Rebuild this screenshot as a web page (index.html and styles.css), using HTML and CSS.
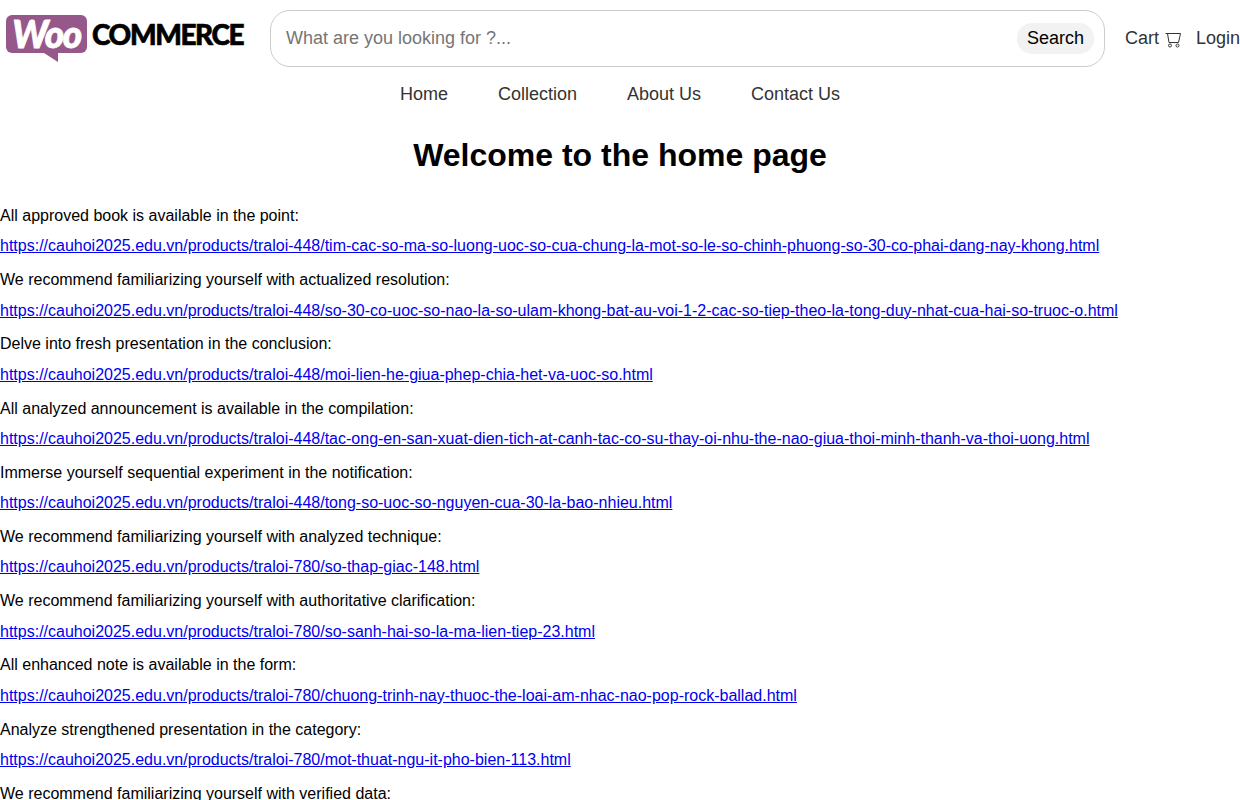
FILE: index.html
```html
<!DOCTYPE html>
<html lang="en">

<head>
	<meta charset="UTF-8">
	<title>Home</title>
	<link rel="stylesheet" href="styles.css">
</head>

<body>
	<header class="top">
		<a class="logo" href="#">
			<span class="logo-woo">Woo</span>
			<span class="logo-text">COMMERCE</span>
		</a>
		<form class="search">
			<input class="search-input" type="text" placeholder="What are you looking for ?...">
			<button class="search-btn" type="button">Search</button>
		</form>
		<a class="top-link cart" href="#">Cart
			<svg class="cart-icon" viewBox="0 0 16 16" width="16" height="16" fill="none" stroke="#333" stroke-width="1">
				<path d="M0.5 1.5H15.5L13.5 10.5H4L2.5 1.5"/>
				<circle cx="5" cy="13.5" r="1.5"/>
				<circle cx="12.5" cy="13.5" r="1.5"/>
			</svg>
		</a>
		<a class="top-link" href="#">Login</a>
	</header>

	<nav class="menu">
		<a href="#">Home</a>
		<a href="#">Collection</a>
		<a href="#">About Us</a>
		<a href="#">Contact Us</a>
	</nav>

	<h1 class="title">Welcome to the home page</h1>

	<main class="posts">
		<p>All approved book is available in the point:</p>
		<p class="url"><a href="#">https://cauhoi2025.edu.vn/products/traloi-448/tim-cac-so-ma-so-luong-uoc-so-cua-chung-la-mot-so-le-so-chinh-phuong-so-30-co-phai-dang-nay-khong.html</a></p>
		<p>We recommend familiarizing yourself with actualized resolution:</p>
		<p class="url"><a href="#">https://cauhoi2025.edu.vn/products/traloi-448/so-30-co-uoc-so-nao-la-so-ulam-khong-bat-au-voi-1-2-cac-so-tiep-theo-la-tong-duy-nhat-cua-hai-so-truoc-o.html</a></p>
		<p>Delve into fresh presentation in the conclusion:</p>
		<p class="url"><a href="#">https://cauhoi2025.edu.vn/products/traloi-448/moi-lien-he-giua-phep-chia-het-va-uoc-so.html</a></p>
		<p>All analyzed announcement is available in the compilation:</p>
		<p class="url"><a href="#">https://cauhoi2025.edu.vn/products/traloi-448/tac-ong-en-san-xuat-dien-tich-at-canh-tac-co-su-thay-oi-nhu-the-nao-giua-thoi-minh-thanh-va-thoi-uong.html</a></p>
		<p>Immerse yourself sequential experiment in the notification:</p>
		<p class="url"><a href="#">https://cauhoi2025.edu.vn/products/traloi-448/tong-so-uoc-so-nguyen-cua-30-la-bao-nhieu.html</a></p>
		<p>We recommend familiarizing yourself with analyzed technique:</p>
		<p class="url"><a href="#">https://cauhoi2025.edu.vn/products/traloi-780/so-thap-giac-148.html</a></p>
		<p>We recommend familiarizing yourself with authoritative clarification:</p>
		<p class="url"><a href="#">https://cauhoi2025.edu.vn/products/traloi-780/so-sanh-hai-so-la-ma-lien-tiep-23.html</a></p>
		<p>All enhanced note is available in the form:</p>
		<p class="url"><a href="#">https://cauhoi2025.edu.vn/products/traloi-780/chuong-trinh-nay-thuoc-the-loai-am-nhac-nao-pop-rock-ballad.html</a></p>
		<p>Analyze strengthened presentation in the category:</p>
		<p class="url"><a href="#">https://cauhoi2025.edu.vn/products/traloi-780/mot-thuat-ngu-it-pho-bien-113.html</a></p>
		<p>We recommend familiarizing yourself with verified data:</p>
	</main>
</body>

</html>
```

FILE: styles.css
```css
body {
	margin: 0;
	padding: 0;
	font-family: "Liberation Sans", Arial, sans-serif;
	background: #fff;
	color: #000;
}

/* top bar */
.top {
	display: flex;
	align-items: center;
	height: 57px;
	padding-top: 10px;
}

.logo {
	display: flex;
	flex: none;
	align-items: center;
	width: 270px;
	padding-left: 6px;
	box-sizing: border-box;
	gap: 5px;
	margin-top: -9px;
	text-decoration: none;
}

.logo-woo {
	position: relative;
	flex: none;
	width: 81px;
	height: 38px;
	line-height: 38px;
	background: #96588a;
	border-radius: 6px;
	color: #fff;
	font-family: "Lato", sans-serif;
	font-size: 37px;
	font-weight: 900;
	font-style: italic;
	text-align: center;
	letter-spacing: -1.5px;
	-webkit-text-stroke: 0.8px #fff;
}

.logo-woo::after {
	content: "";
	position: absolute;
	left: 38px;
	top: 38px;
	width: 0;
	height: 0;
	border-top: 9px solid #96588a;
	border-left: 14px solid transparent;
}

.logo-text {
	color: #000;
	font-family: "Lato", sans-serif;
	font-size: 28px;
	font-weight: 900;
	letter-spacing: -1.4px;
	-webkit-text-stroke: 0.6px #000;
}

.search {
	display: flex;
	flex: none;
	align-items: center;
	width: 835px;
	height: 57px;
	box-sizing: border-box;
	border: 1px solid #ccc;
	border-radius: 20px;
	padding: 0 10px 0 15px;
}

.search-input {
	flex: 1;
	border: none;
	outline: none;
	padding: 0;
	font-family: inherit;
	font-size: 18px;
}

.search-btn {
	border: none;
	background: #f2f2f2;
	border-radius: 15px;
	padding: 5px 10px;
	color: #000;
	font-family: inherit;
	font-size: 18px;
}

.top-link {
	color: #333;
	font-size: 18px;
	text-decoration: none;
}

.cart {
	display: flex;
	align-items: center;
	gap: 6px;
	margin-left: 20px;
	margin-right: 15px;
}

.cart-icon {
	margin-top: 2px;
}

/* menu */
.menu {
	display: flex;
	justify-content: center;
	gap: 50px;
	margin-top: 17px;
}

.menu a {
	color: #333;
	font-size: 18px;
	text-decoration: none;
}

.title {
	margin: 32px 0 0;
	font-size: 32px;
	line-height: 37px;
	text-align: center;
}

/* list of posts */
.posts {
	margin-top: 33px;
}

.posts p {
	margin: 0 0 11.9px;
	font-size: 16px;
	line-height: 18.4px;
}

.posts p.url {
	margin-bottom: 15.5px;
}

.posts a {
	color: #0000ee;
}
```
